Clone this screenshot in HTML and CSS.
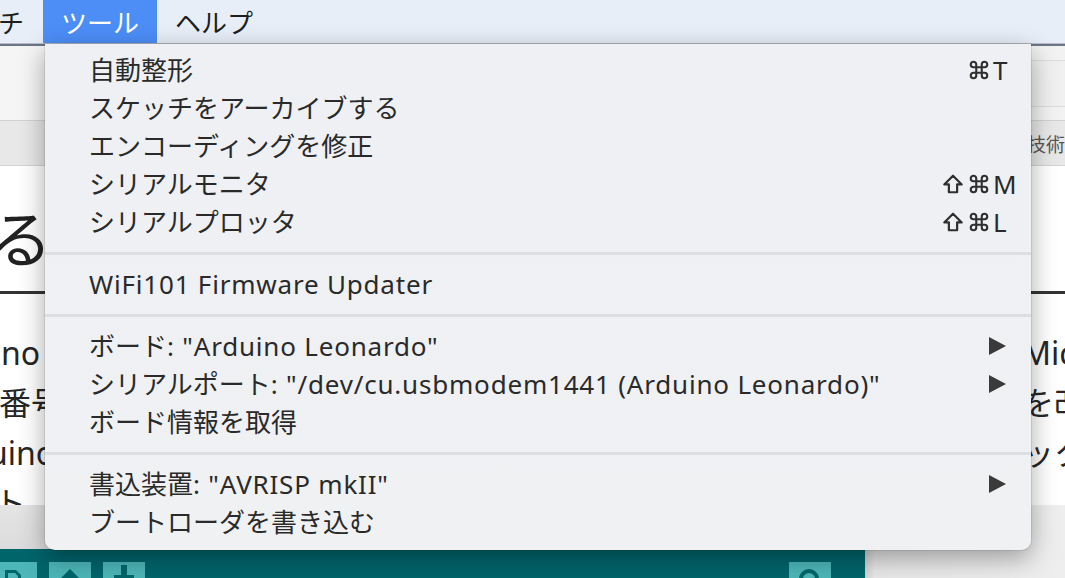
FILE: index.html
```html
<!DOCTYPE html>
<html lang="ja">
<head>
<meta charset="utf-8">
<title>ツール</title>
<link rel="stylesheet" href="styles.css">
</head>
<body>
<div class="menubar">
  <span class="mb-item mb-cut">チ</span>
  <span class="mb-item mb-active">ツール</span>
  <span class="mb-item">ヘルプ</span>
</div>

<div class="window">
  <div class="win-top">
    <div class="win-top-right"></div>
  </div>
  <div class="win-tabs">
    <span class="tab-text">技術</span>
  </div>
  <div class="win-body">
    <div class="col col-left">
      <div class="heading"><span class="heading-text">るて</span></div>
      <div class="para">
        <div class="line l-no">no</div>
        <div class="line l-ban">番号</div>
        <div class="line l-uino">uino</div>
        <div class="line l-to">ト</div>
      </div>
    </div>
    <div class="col col-right">
      <div class="heading"></div>
      <div class="para">
        <div class="line r-line">Micro</div>
        <div class="line r-line">を改善</div>
        <div class="line r-line">ックス</div>
      </div>
    </div>
  </div>
  <div class="win-bottom">
    <div class="ide">
      <div class="ide-gray"></div>
      <div class="ide-toolbar">
        <div class="tb-btn">
          <svg width="42" height="16" viewBox="0 0 42 16"><path d="M10 8 H21 L26 13 V16 H23 V14 L20 11 H13 V16 H10 Z" fill="#00656b"/><rect x="13" y="11" width="2.5" height="2.5" fill="#4db6b8"/><rect x="17" y="11" width="2.5" height="2.5" fill="#4db6b8"/></svg>
        </div>
        <div class="tb-btn">
          <svg width="42" height="16" viewBox="0 0 42 16"><path d="M21 7 L30 16 H12 Z" fill="#00656b"/></svg>
        </div>
        <div class="tb-btn">
          <svg width="42" height="16" viewBox="0 0 42 16"><rect x="18" y="3" width="6" height="13" fill="#00656b"/><rect x="11" y="13" width="20" height="3" fill="#00656b"/></svg>
        </div>
        <div class="tb-spacer"></div>
        <div class="tb-btn">
          <svg width="42" height="16" viewBox="0 0 42 16"><circle cx="20" cy="17" r="8" fill="none" stroke="#00656b" stroke-width="4"/></svg>
        </div>
      </div>
    </div>
    <div class="side-gray"></div>
  </div>
</div>

<div class="menu">
  <div class="item"><span class="label">自動整形</span><span class="sc"><span class="mods"><svg class="cmd" width="22" height="22" viewBox="0 0 24 24"><path d="M15 6v12a3 3 0 1 0 3-3H6a3 3 0 1 0 3 3V6a3 3 0 1 0-3 3h12a3 3 0 1 0-3-3"/></svg></span><span class="key">T</span></span></div>
  <div class="item"><span class="label">スケッチをアーカイブする</span></div>
  <div class="item"><span class="label">エンコーディングを修正</span></div>
  <div class="item"><span class="label">シリアルモニタ</span><span class="sc"><span class="mods"><svg class="shift" width="22" height="22" viewBox="0 0 24 24"><path d="M12 3 L21.5 12.5 H16.5 V21 H7.5 V12.5 H2.5 Z"/></svg><svg class="cmd" width="22" height="22" viewBox="0 0 24 24"><path d="M15 6v12a3 3 0 1 0 3-3H6a3 3 0 1 0 3 3V6a3 3 0 1 0-3 3h12a3 3 0 1 0-3-3"/></svg></span><span class="key">M</span></span></div>
  <div class="item"><span class="label">シリアルプロッタ</span><span class="sc"><span class="mods"><svg class="shift" width="22" height="22" viewBox="0 0 24 24"><path d="M12 3 L21.5 12.5 H16.5 V21 H7.5 V12.5 H2.5 Z"/></svg><svg class="cmd" width="22" height="22" viewBox="0 0 24 24"><path d="M15 6v12a3 3 0 1 0 3-3H6a3 3 0 1 0 3 3V6a3 3 0 1 0-3 3h12a3 3 0 1 0-3-3"/></svg></span><span class="key">L</span></span></div>
  <div class="sep"></div>
  <div class="item"><span class="label"><span class="en">WiFi101 Firmware Updater</span></span></div>
  <div class="sep"></div>
  <div class="item"><span class="label">ボード<span class="en">: "Arduino Leonardo"</span></span><span class="arrow"></span></div>
  <div class="item"><span class="label">シリアルポート<span class="en">: "/dev/cu.usbmodem1441 (Arduino Leonardo)"</span></span><span class="arrow"></span></div>
  <div class="item"><span class="label">ボード情報を取得</span></div>
  <div class="sep"></div>
  <div class="item"><span class="label">書込装置<span class="en">: "AVRISP mkII"</span></span><span class="arrow"></span></div>
  <div class="item"><span class="label">ブートローダを書き込む</span></div>
</div>
</body>
</html>
```

FILE: styles.css
```css
* { box-sizing: border-box; }

html, body {
  margin: 0;
  padding: 0;
}

body {
  width: 1065px;
  height: 578px;
  overflow: hidden;
  position: relative;
  background: #ffffff;
  font-family: "Noto Sans", "Noto Sans CJK JP", sans-serif;
  color: #2b2b2b;
}

/* ---------- menu bar ---------- */
.menubar {
  height: 44px;
  display: flex;
  background: #e7eef7;
  border-bottom: 1px solid #b7bec7;
}

.mb-item {
  font-family: "Noto Sans CJK JP", sans-serif;
  font-size: 26px;
  line-height: 43px;
  padding: 0 18px;
  color: #1e1e1e;
}

.mb-cut {
  width: 45px;
  padding: 0;
  margin-left: -2px;
}

.mb-active {
  background: #4c8df6;
  color: #ffffff;
  padding: 0 18px;
  width: 114px;
}

/* ---------- background window ---------- */
.window {
  height: 534px;
  display: flex;
  flex-direction: column;
}

.win-top {
  height: 76px;
  background: linear-gradient(90deg, #f5f5f5 0%, #f2f2f2 100%);
  border-top: 2px solid #6b7685;
  display: flex;
  justify-content: flex-end;
}

.win-top-right {
  width: 40px;
  margin-top: 14px;
  height: 47px;
  border-top: 1px solid #dcdcdc;
  border-bottom: 1px solid #dcdcdc;
  background: #f0f0f0;
}

.win-tabs {
  height: 46px;
  background: #e8e8e8;
  border-top: 1px solid #d3d3d3;
  border-bottom: 1px solid #d3d3d3;
  display: flex;
  justify-content: flex-end;
  align-items: center;
}

.tab-text {
  font-family: "Noto Sans CJK JP", sans-serif;
  font-size: 19px;
  color: #555;
  width: 38px;
  overflow: hidden;
  white-space: nowrap;
}

.win-body {
  flex: 1;
  display: flex;
  justify-content: space-between;
  overflow: hidden;
  background: #fff;
}

.col {
  overflow: hidden;
  white-space: nowrap;
}

.col-left { width: 46px; }
.col-right { width: 40px; }

.heading {
  height: 128px;
  border-bottom: 3px solid #333;
  display: flex;
  align-items: center;
}

.heading-text {
  font-family: "Noto Sans CJK JP", sans-serif;
  font-size: 62px;
  line-height: 1;
  color: #222;
  margin-left: -10px;
  margin-top: 14px;
}

.para {
  padding-top: 34px;
  font-family: "Noto Sans", "Noto Sans CJK JP", sans-serif;
  font-size: 32px;
  color: #262626;
}

.line {
  height: 50px;
  line-height: 50px;
}

.l-no { margin-left: 1px; }
.l-ban { margin-left: -1px; }
.l-uino { margin-left: -12px; }
.l-to { margin-left: -6px; }

.r-line { margin-left: -3px; }

/* ---------- bottom strip ---------- */
.win-bottom {
  height: 73px;
  display: flex;
}

.ide {
  width: 865px;
  display: flex;
  flex-direction: column;
}

.ide-gray {
  height: 44px;
  background: linear-gradient(180deg, #e4e4e4, #dcdcdc);
}

.ide-toolbar {
  flex: 1;
  background: #00656b;
  display: flex;
  align-items: flex-end;
  gap: 12px;
  margin-left: -5px;
}

.tb-btn {
  width: 42px;
  height: 16px;
  background: #4db6b8;
  flex: none;
}

.tb-btn svg { display: block; }

.tb-spacer { width: 620px; flex: none; }

.side-gray {
  flex: 1;
  background: linear-gradient(90deg, #d2d2d2 0px, #e8e8e8 10px, #eeeeee 100%);
}

/* ---------- dropdown menu ---------- */
.menu {
  position: absolute;
  top: 44px;
  left: 45px;
  width: 986px;
  height: 506px;
  padding: 7px 0 9px;
  background: linear-gradient(180deg, #eef0f3 0%, #f0f1f3 100%);
  border-radius: 0 0 10px 10px;
  box-shadow: 0 0 0 1px rgba(0, 0, 0, 0.08), 0 8px 26px rgba(0, 0, 0, 0.35);
  display: flex;
  flex-direction: column;
}

.item {
  height: 38px;
  flex: none;
  display: flex;
  align-items: center;
  padding: 0 14px 0 44px;
  font-family: "Noto Sans", "Noto Sans CJK JP", sans-serif;
  font-size: 26px;
  line-height: 38px;
  color: #2a2a2a;
  white-space: nowrap;
}

.label {
  flex: 1;
}

.en {
  letter-spacing: 0.8px;
}

.sep {
  height: 24px;
  flex: none;
  display: flex;
  align-items: center;
}

.sep::before {
  content: "";
  display: block;
  width: 100%;
  height: 3px;
  background: #dcdee2;
}

.sc {
  display: flex;
  align-items: center;
  color: #2a2a2a;
}

.mods {
  display: flex;
  align-items: center;
  gap: 4px;
}

.mods svg {
  display: block;
  fill: none;
  stroke: #2f2f2f;
  stroke-linejoin: round;
}

.cmd path { stroke-width: 2.3; }
.shift path { stroke-width: 2.4; }

.key {
  width: 27px;
  padding-left: 3px;
  font-family: "Noto Sans", sans-serif;
  font-size: 26px;
}

.arrow {
  width: 0;
  height: 0;
  border-left: 17px solid #3a3a3a;
  border-top: 9px solid transparent;
  border-bottom: 9px solid transparent;
  margin-right: 11px;
}
```
